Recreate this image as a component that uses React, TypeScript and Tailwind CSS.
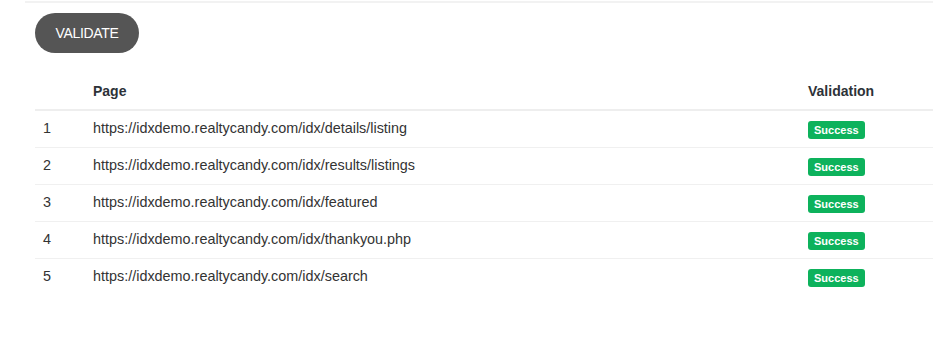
const pages = [
  'https://idxdemo.realtycandy.com/idx/details/listing',
  'https://idxdemo.realtycandy.com/idx/results/listings',
  'https://idxdemo.realtycandy.com/idx/featured',
  'https://idxdemo.realtycandy.com/idx/thankyou.php',
  'https://idxdemo.realtycandy.com/idx/search',
]

export default function App() {
  return (
    <div className="w-[933px] h-[339px] bg-white font-['Liberation_Sans',Arial,sans-serif] text-[#333]">
      <div className="ml-[25px] mt-px border-t-2 border-[#f2f2f2] pt-[10px] pl-[10px]">
        <button className="w-[104px] h-10 rounded-full bg-[#555555] text-white text-sm font-light tracking-tight">
          VALIDATE
        </button>

        <table className="mt-5 w-full border-collapse text-sm">
          <thead>
            <tr className="border-b-2 border-[#eeeeee]">
              <th className="w-[50px] h-[37px]" />
              <th className="px-2 text-left font-bold text-[#2d3238]">Page</th>
              <th className="w-[133px] px-2 text-left font-bold text-[#2d3238]">Validation</th>
            </tr>
          </thead>
          <tbody>
            {pages.map((url, i) => (
              <tr key={url} className={i < pages.length - 1 ? 'border-b border-[#f0f0f0]' : ''}>
                <td className="h-[37px] px-2 text-[14.4px]">{i + 1}</td>
                <td className="px-2 text-[14.4px]">{url}</td>
                <td className="px-2">
                  <span className="inline-block h-[18px] px-[6px] leading-[18px] rounded-[3px] bg-[#0db25c] text-white text-[11px] font-bold align-middle">
                    Success
                  </span>
                </td>
              </tr>
            ))}
          </tbody>
        </table>
      </div>
    </div>
  )
}
